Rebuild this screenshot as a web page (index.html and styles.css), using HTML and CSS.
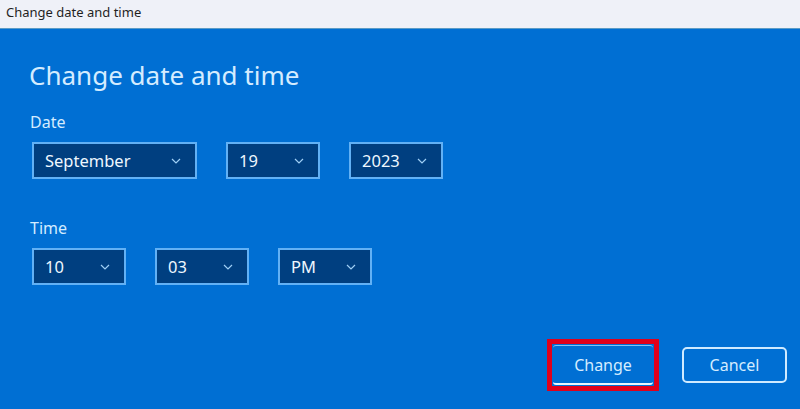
FILE: index.html
```html
<!DOCTYPE html>
<html>
<head><title>Change date and time</title>
<link rel="stylesheet" href="styles.css">
</head>
<body>
<div class="titlebar">Change date and time</div>
<div class="dialog">
  <h1>Change date and time</h1>

  <div class="label">Date</div>
  <div class="row">
    <div class="select wide"><span>September</span><svg viewBox="0 0 10 6"><path d="M1 1 L5 5 L9 1"/></svg></div>
    <div class="select"><span>19</span><svg viewBox="0 0 10 6"><path d="M1 1 L5 5 L9 1"/></svg></div>
    <div class="select"><span>2023</span><svg viewBox="0 0 10 6"><path d="M1 1 L5 5 L9 1"/></svg></div>
  </div>

  <div class="label time">Time</div>
  <div class="row">
    <div class="select"><span>10</span><svg viewBox="0 0 10 6"><path d="M1 1 L5 5 L9 1"/></svg></div>
    <div class="select"><span>03</span><svg viewBox="0 0 10 6"><path d="M1 1 L5 5 L9 1"/></svg></div>
    <div class="select"><span>PM</span><svg viewBox="0 0 10 6"><path d="M1 1 L5 5 L9 1"/></svg></div>
  </div>

  <div class="actions">
    <div class="highlight"><button class="primary">Change</button></div>
    <button class="secondary">Cancel</button>
  </div>
</div>
</body>
</html>
```

FILE: styles.css
```css
body {
  margin: 0;
  font-family: "Noto Sans", "Open Sans", sans-serif;
  background-color: #006fd3;
  height: 409px;
  overflow: hidden;
}

.titlebar {
  height: 28px;
  line-height: 25px;
  padding-left: 6px;
  font-size: 13px;
  color: #1f1f1f;
  background-color: #eff1f8;
  border-bottom: 1px solid #5b9bc6;
}

.dialog {
  padding-left: 29px;
  color: #d4ecff;
}

.dialog h1 {
  margin: 28px 0 0 0;
  font-size: 26px;
  font-weight: normal;
  line-height: 36px;
}

.label {
  margin-top: 19px;
  margin-left: 1px;
  font-size: 16px;
  line-height: 20px;
}

.label.time {
  margin-top: 39px;
}

.row {
  display: flex;
  gap: 29px;
  margin-top: 10px;
  margin-left: 3px;
}

.select {
  display: flex;
  align-items: center;
  justify-content: space-between;
  box-sizing: border-box;
  width: 94px;
  height: 37px;
  padding: 0 14px 0 11px;
  background-color: #003f80;
  border: 2px solid #62b1f5;
  font-size: 16.5px;
  color: #eef7ff;
}

.select.wide {
  width: 165px;
}

.select svg {
  width: 10px;
  height: 6px;
  fill: none;
  stroke: #9fcff5;
  stroke-width: 1.2;
}

.actions {
  display: flex;
  justify-content: flex-end;
  align-items: center;
  gap: 23px;
  margin-top: 54px;
  margin-right: 13px;
}

.highlight {
  border: 5px solid #e0001b;
  padding: 1px;
}

button {
  font-family: "Noto Sans", "Open Sans", sans-serif;
  font-size: 16px;
  color: #d4ecff;
  background-color: #006fd3;
  cursor: pointer;
}

button.primary {
  width: 100px;
  height: 40px;
  border: none;
  border-top: 1px solid #7fc2f5;
  border-bottom: 2px solid #e8f5ff;
  border-radius: 3px;
}

button.secondary {
  width: 105px;
  height: 36px;
  border: 2px solid #cfeaff;
  border-radius: 5px;
}
```
